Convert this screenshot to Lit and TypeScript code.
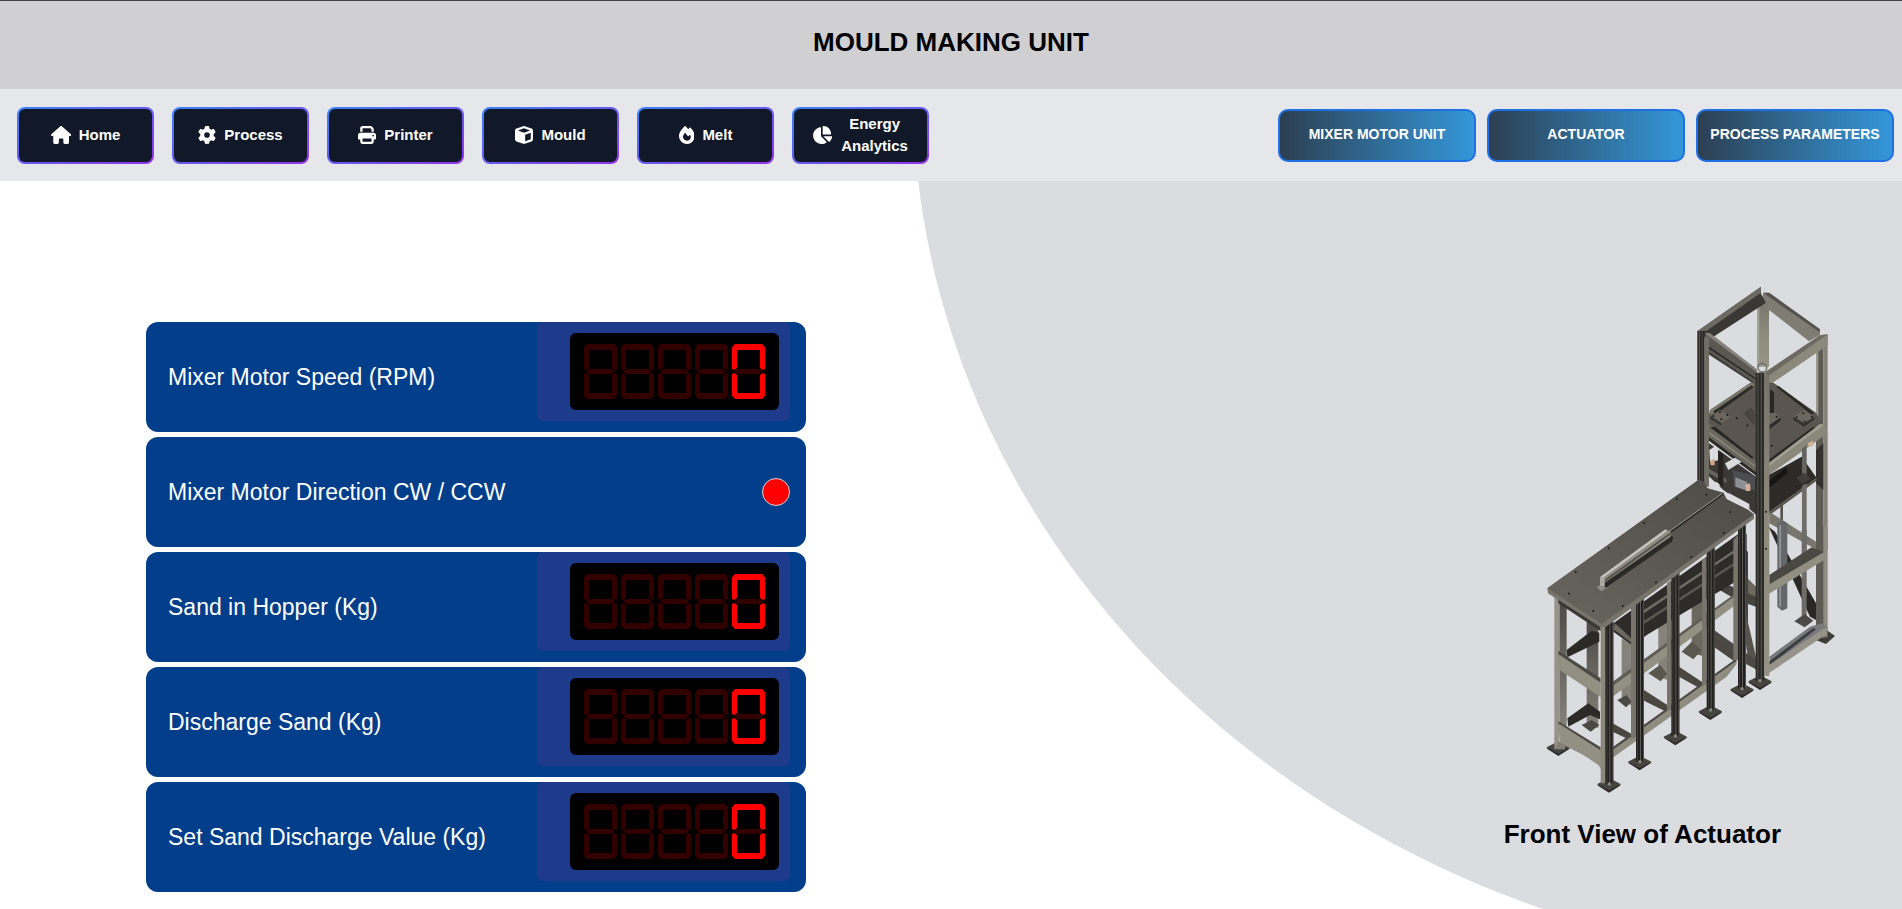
import { LitElement, html, css, svg } from "lit";
import { customElement, property } from "lit/decorators.js";

interface NavItem {
  label: string;
  width: number;
  path: string;
}

const NAV: NavItem[] = [
  {
    label: "Home",
    width: 576,
    path: "M575.8 255.5c0 18-15 32.1-32 32.1h-32l.7 160.2c0 2.7-.2 5.4-.5 8.1V472c0 22.1-17.9 40-40 40H456c-1.1 0-2.2 0-3.3-.1c-1.4 .1-2.8 .1-4.2 .1H416 392c-22.1 0-40-17.9-40-40V448 384c0-17.7-14.3-32-32-32H256c-17.7 0-32 14.3-32 32v64 24c0 22.1-17.9 40-40 40H160 128.1c-1.5 0-3-.1-4.5-.2c-1.2 .1-2.4 .2-3.6 .2H104c-22.1 0-40-17.9-40-40V360c0-.9 0-1.9 .1-2.8V287.6H32c-18 0-32-14-32-32.1c0-9 3-17 10-24L266.4 8c7-7 15-8 22-8s15 2 21 7L564.8 231.5c8 7 12 15 11 24z",
  },
  {
    label: "Process",
    width: 512,
    path: "M495.9 166.6c3.2 8.7 .5 18.4-6.4 24.6l-43.3 39.4c1.1 8.3 1.7 16.8 1.7 25.4s-.6 17.1-1.7 25.4l43.3 39.4c6.9 6.2 9.6 15.9 6.4 24.6c-4.4 11.9-9.7 23.3-15.8 34.3l-4.7 8.1c-6.6 11-14 21.4-22.1 31.2c-5.9 7.2-15.7 9.6-24.5 6.8l-55.7-17.7c-13.4 10.3-28.2 18.9-44 25.4l-12.5 57.1c-2 9.1-9 16.3-18.2 17.8c-13.8 2.3-28 3.5-42.5 3.5s-28.7-1.2-42.5-3.5c-9.2-1.5-16.2-8.7-18.2-17.8l-12.5-57.1c-15.8-6.5-30.6-15.1-44-25.4L83.1 425.9c-8.8 2.8-18.6 .3-24.5-6.8c-8.1-9.8-15.5-20.2-22.1-31.2l-4.7-8.1c-6.1-11-11.4-22.4-15.8-34.3c-3.2-8.7-.5-18.4 6.4-24.6l43.3-39.4C64.6 273.1 64 264.6 64 256s.6-17.1 1.7-25.4L22.4 191.2c-6.9-6.2-9.6-15.9-6.4-24.6c4.4-11.9 9.7-23.3 15.8-34.3l4.7-8.1c6.6-11 14-21.4 22.1-31.2c5.9-7.2 15.7-9.6 24.5-6.8l55.7 17.7c13.4-10.3 28.2-18.9 44-25.4l12.5-57.1c2-9.1 9-16.3 18.2-17.8C227.3 1.2 241.5 0 256 0s28.7 1.2 42.5 3.5c9.2 1.5 16.2 8.7 18.2 17.8l12.5 57.1c15.8 6.5 30.6 15.1 44 25.4l55.7-17.7c8.8-2.8 18.6-.3 24.5 6.8c8.1 9.8 15.5 20.2 22.1 31.2l4.7 8.1c6.1 11 11.4 22.4 15.8 34.3zM256 336a80 80 0 1 0 0-160 80 80 0 1 0 0 160z",
  },
  {
    label: "Printer",
    width: 512,
    path: "M128 0C92.7 0 64 28.7 64 64v96h64V64H354.7L384 93.3V160h64V93.3c0-17-6.7-33.3-18.7-45.3L400 18.7C388 6.7 371.7 0 354.7 0H128zM384 352v32 64H128V384 368 352H384zm64 32h32c17.7 0 32-14.3 32-32V256c0-35.3-28.7-64-64-64H64c-35.3 0-64 28.7-64 64v96c0 17.7 14.3 32 32 32H64v64c0 35.3 28.7 64 64 64H384c35.3 0 64-28.7 64-64V384zM432 248a24 24 0 1 1 0 48 24 24 0 1 1 0-48z",
  },
  {
    label: "Mould",
    width: 512,
    path: "M234.5 5.7c13.9-5 29.1-5 43.1 0l192 68.6C495 83.4 512 107.5 512 134.6V377.4c0 27-17 51.2-42.5 60.3l-192 68.6c-13.9 5-29.1 5-43.1 0l-192-68.6C17 428.6 0 404.5 0 377.4V134.6c0-27 17-51.2 42.5-60.3l192-68.6zM256 66L82.3 128 256 190l173.7-62L256 66zm32 368.6l160-57.1v-188L288 246.6v188z",
  },
  {
    label: "Melt",
    width: 448,
    path: "M159.3 5.4c7.8-7.3 19.9-7.2 27.7 .1c27.6 25.9 53.5 53.8 77.7 84c11-14.4 23.5-30.1 37-42.9c7.9-7.4 20.1-7.4 28 .1c34.6 33 63.9 76.6 84.5 118c20.3 40.8 33.8 82.5 33.8 111.9C448 404.2 348.2 512 224 512C98.4 512 0 404.1 0 276.5c0-38.4 17.8-85.3 45.4-131.7C73.3 97.7 112.7 48.6 159.3 5.4zM225.7 416c25.3 0 47.7-7 68.8-21c42.1-29.4 53.4-88.2 28.1-134.4c-4.5-9-16-9.6-22.5-2l-25.2 29.3c-6.6 7.6-18.5 7.4-24.7-.5c-16.5-21-46-58.5-62.8-79.8c-6.3-8-18.3-8.1-24.7-.1c-33.8 42.5-50.8 69.3-50.8 99.4C112 375.4 162.6 416 225.7 416z",
  },
  {
    label: "Energy Analytics",
    width: 576,
    path: "M304 240V16.6c0-9 7-16.6 16-16.6C443.7 0 544 100.3 544 224c0 9-7.6 16-16.6 16H304zM32 272C32 150.7 122.1 50.3 239 34.3c9.2-1.3 17 6.1 17 15.4V288L412.5 444.5c6.7 6.7 6.2 17.7-1.5 23.1C371.8 495.6 323.8 512 272 512C139.5 512 32 404.6 32 272zm526.4 16c9.3 0 16.6 7.8 15.4 17c-7.7 55.9-34.6 105.6-73.9 142.3c-6 5.6-15.4 5.2-21.2-.7L320 288H558.4z",
  },
];

const UNITS = ["MIXER MOTOR UNIT", "ACTUATOR", "PROCESS PARAMETERS"];

const READINGS: { label: string; value?: number; on?: boolean }[] = [
  { label: "Mixer Motor Speed (RPM)", value: 0 },
  { label: "Mixer Motor Direction CW / CCW", on: false },
  { label: "Sand in Hopper (Kg)", value: 0 },
  { label: "Discharge Sand (Kg)", value: 0 },
  { label: "Set Sand Discharge Value (Kg)", value: 0 },
];

/* Segment outlines a-g on a 33 x 55 digit. */
const SEGMENTS = [
  "3,0 30,0 32,2 29,6 4,6 1,2",
  "28,6 31,2 33,3 33,25 31,26 28,24",
  "28,31 31,29 33,30 33,52 31,53 28,49",
  "4,49 29,49 32,53 30,55 3,55 1,53",
  "0,30 2,29 5,31 5,49 2,53 0,52",
  "0,3 2,2 5,6 5,24 2,26 0,25",
  "5,25 28,25 31,27 28,30 5,30 2,27",
];
const GLYPHS: Record<string, string> = {
  "0": "abcdef", "1": "bc", "2": "abged", "3": "abgcd", "4": "fgbc",
  "5": "afgcd", "6": "afgedc", "7": "abc", "8": "abcdefg", "9": "abcdfg",
};

@customElement("seven-segment")
export class SevenSegment extends LitElement {
  @property({ type: Number }) value = 0;
  @property({ type: Number }) count = 5;

  static styles = css`
    :host {
      display: flex;
      gap: 4px;
      padding: 11px 14px;
      background: #000;
      border-radius: 6px;
    }
    .digit {
      width: 33px;
      height: 55px;
      display: block;
    }
    .off { fill: #330000; }
    .lit { fill: #ff0000; }
  `;

  render() {
    const chars = String(this.value).padStart(this.count, " ").split("");
    return chars.map((ch) => {
      const lit = GLYPHS[ch] ?? "";
      return html`<svg class="digit" viewBox="0 0 33 55" aria-hidden="true">
        ${SEGMENTS.map(
          (points, i) =>
            svg`<polygon class=${lit.includes("abcdefg"[i]) ? "lit" : "off"} points=${points}></polygon>`
        )}
      </svg>`;
    });
  }
}

type Shape = [points: string, fill: string];
const poly = (shapes: Shape[]) =>
  shapes.map(([points, fill]) => svg`<polygon points=${points} fill=${fill}></polygon>`);
const dots = (points: [number, number][]) =>
  points.map(([x, y]) => svg`<circle cx=${x} cy=${y} r="3" fill="#1c1b19"></circle>`);
const foot = (x: number, y: number) => svg`
  <polygon points="${x - 35},${y} ${x},${y - 18} ${x + 35},${y} ${x},${y + 24}" fill="#46443f"></polygon>
  <polygon points="${x - 35},${y} ${x},${y + 19} ${x + 35},${y} ${x + 33},${y + 5} ${x},${y + 26} ${x - 33},${y + 5}" fill="#2d2b28"></polygon>`;
const darkPost = (x: number, top: number, bottom: number) => svg`
  <rect x=${x} y=${top} width="24" height=${bottom - top} fill="#22211f"></rect>
  <rect x=${x + 4} y=${top} width="2" height=${bottom - top} fill="#4f4d48"></rect>
  <rect x=${x + 12} y=${top} width="3" height=${bottom - top} fill="#5d5b55"></rect>
  <rect x=${x + 21} y=${top} width="3" height=${bottom - top} fill="#514f49"></rect>
  <circle cx=${x + 12} cy=${bottom} r="5" fill="#8a8983"></circle>`;

@customElement("actuator-drawing")
export class ActuatorDrawing extends LitElement {
  static styles = css`
    :host { display: block; }
    .drawing { display: block; width: 100%; height: auto; }
  `;

  render() {
    return html`<svg class="drawing" viewBox="48 -522 870 1530" role="img" aria-label="Actuator frame">
      <defs>
        <linearGradient id="steel" x1="0" y1="0" x2="0" y2="1">
          <stop offset="0" stop-color="#77746a"></stop>
          <stop offset="0.5" stop-color="#8c897d"></stop>
          <stop offset="1" stop-color="#959286"></stop>
        </linearGradient>
        <linearGradient id="shade" x1="0" y1="0" x2="0" y2="1">
          <stop offset="0" stop-color="#4b4a45"></stop>
          <stop offset="1" stop-color="#838177"></stop>
        </linearGradient>
        <linearGradient id="plate" x1="0" y1="1" x2="1" y2="0">
          <stop offset="0" stop-color="#69665e"></stop>
          <stop offset="0.5" stop-color="#5b5851"></stop>
          <stop offset="1" stop-color="#4d4b46"></stop>
        </linearGradient>
      </defs>

      <!-- tower, upper half -->
      <g transform="translate(390 -570)">
        ${poly([
          ["291,85 327,85 327,290 291,290", "url(#steel)"],
          ["291,85 298,85 298,290 291,290", "#a3a095"],
          ["310,68 327,68 480,178 480,195 447,214 327,120 303,98", "#7f7d73"],
          ["310,68 327,68 480,178 478,186 320,76", "#55534d"],
          ["113,183 303,50 303,72 318,98 150,207 135,203", "#3a3834"],
          ["113,183 303,50 303,68 140,182", "#6c6a62"],
          ["468,215 490,205 490,840 468,840", "#5d5b54"],
          ["468,215 475,212 475,460 468,460", "#9b988d"],
          ["490,200 503,193 503,840 490,840", "#85827a"],
          ["468,540 490,520 490,660 468,640", "#33312e"],
          ["135,188 150,190 290,298 290,342 135,240", "#5a5851"],
          ["135,188 150,190 290,298 290,306 145,198", "#85837a"],
          ["135,222 290,326 290,331 135,228", "#272623"],
          ["135,238 290,341 290,347 135,246", "#3a3935"],
          ["313,308 480,196 503,193 503,226 327,346 313,352", "#8b887c"],
          ["313,308 480,196 503,193 325,318", "#6c6a61"],
        ])}
        <circle cx="307" cy="293" r="13" fill="none" stroke="#77756d" stroke-width="5"></circle>
        ${poly([
          ["150,420 275,336 340,338 468,428 488,462 325,582 290,592 140,468", "#5a564f"],
          ["150,420 275,336 284,345 152,436", "#7b786e"],
          ["160,424 275,346 280,352 165,434", "#2c2a27"],
          ["350,352 356,348 462,428 455,434", "#2b2926"],
          ["330,358 342,366 342,430 330,430", "#292724"],
          ["152,438 180,420 212,440 184,460", "#6b675f"],
          ["152,438 184,460 184,467 150,446", "#35332f"],
          ["400,440 432,420 464,440 432,460", "#6b675f"],
          ["400,440 432,460 464,440 464,448 432,470 400,450", "#35332f"],
          ["318,430 345,428 362,442 328,466", "#68655d"],
          ["328,466 362,442 362,452 328,478", "#2d2b28"],
          ["250,430 272,412 284,425 284,468", "#494640"],
          ["140,470 150,462 290,578 290,618 137,505", "#69675e"],
          ["150,472 165,470 280,562 276,566", "#292724"],
          ["137,478 290,590 290,594 137,484", "#8d8a80"],
          ["137,494 290,608 290,618 137,505", "#2c2a27"],
          ["325,580 480,462 492,464 503,490 325,616", "#8a877b"],
          ["325,570 460,470 466,474 325,580", "#2c2a27"],
          ["325,580 480,462 492,464 325,590", "#a19e92"],
        ])}
        ${dots([[160, 438], [180, 427], [184, 448], [202, 435], [410, 442], [430, 430], [434, 455], [456, 440], [230, 445], [262, 466], [335, 527], [350, 440]])}
        ${poly([
          ["137,512 290,622 290,736 255,705 190,660 137,610", "#3b3936"],
          ["148,540 166,528 180,545 180,570 150,575", "#dbdce0"],
          ["195,580 225,563 245,575 205,600", "#dbdce0"],
          ["146,630 180,640 176,664 150,648", "#dbdce0"],
          ["205,668 268,702 268,722 215,694", "#dbdce0"],
          ["137,590 200,628 200,640 137,604", "#65635c"],
          ["174,540 190,552 190,650 174,640", "#242320"],
          ["218,600 285,618 285,660 222,650", "#4b4d50"],
          ["226,622 262,636 262,662 226,650", "#8c9095"],
          ["150,572 164,566 164,586 152,586", "#d0a78d"],
          ["256,644 270,640 272,662 258,664", "#d5af98"],
          ["325,616 425,560 470,624 325,728", "#2d2a27"],
          ["328,632 380,590 382,610 328,652", "#161513"],
          ["325,728 470,624 470,632 325,738", "#57544d"],
          ["443,520 458,512 462,526 446,532", "#d0b49b"],
          ["426,535 440,526 440,616 426,620", "#65645f"],
          ["408,624 432,608 454,626 428,642", "#3f3d39"],
          ["426,648 440,640 440,840 426,840", "#706e69"],
          ["361,700 369,695 369,756 361,756", "#55534e"],
        ])}
        <rect x="112" y="183" width="22" height="460" fill="#292825"></rect>
        <rect x="117" y="183" width="3" height="460" fill="#5c5a53"></rect>
        <rect x="125" y="183" width="3" height="460" fill="#4c4a45"></rect>
        <rect x="134" y="200" width="13" height="450" fill="#6f6d64"></rect>
      </g>

      <!-- tower, lower half -->
      ${poly([
        ["858,200 882,200 882,525 858,505", "#5d5b54"],
        ["880,200 893,200 893,522 880,530", "#8f8c80"],
        ["858,540 893,512 915,528 888,552", "#3f3d39"],
        ["876,505 893,500 893,530 876,534", "#85827a"],
        ["718,155 858,245 858,268 718,190", "#77756c"],
        ["716,200 735,215 858,430 858,480 840,470", "#2a2826"],
        ["742,190 756,180 772,190 772,445 756,452 742,440", "#65676a"],
        ["748,195 753,195 753,440 748,440", "#93969a"],
        ["815,210 830,210 830,475 815,475", "#6d6c69"],
        ["793,484 824,462 850,482 824,502", "#4b4a49"],
        ["718,345 845,262 882,276 882,284 718,378", "#4a4843"],
        ["716,374 882,276 882,300 716,402", "#918e82"],
        ["718,590 840,500 875,490 890,500 720,622", "#77797d"],
        ["718,604 850,504 858,508 718,616", "#3c3d40"],
        ["716,616 890,500 890,522 716,640", "#96948a"],
      ])}

      <!-- back of the bench -->
      ${poly([
        ["648,350 678,380 678,420 648,410", "#6a685f"],
        ["648,270 654,276 654,520 648,520", "#44423d"],
        ["560,360 678,410 678,440 620,420 560,385", "#45433e"],
        ["630,440 650,470 678,590 678,630 655,600", "#55534c"],
        ["545,505 678,600 678,628 625,600 545,540", "#4b4943"],
        ["170,480 205,505 205,805 170,790", "url(#shade)"],
        ["275,535 303,550 303,735 275,725", "#85827a"],
        ["385,475 412,490 412,660 385,650", "#85827a"],
        ["485,405 527,425 527,590 485,580", "#6b695f"],
        ["155,795 185,780 208,795 182,815", "#4a4843"],
        ["262,720 290,705 305,725 288,742", "#4a4843"],
        ["355,640 390,615 412,642 392,664", "#5a574f"],
        ["455,575 485,545 515,570 490,598", "#5a574f"],
        ["110,570 185,512 208,518 208,545 112,592", "#2c2a27"],
        ["112,775 175,730 210,755 210,778 180,765 115,800", "#2c2a27"],
        ["248,790 305,822 300,840 248,815", "#4a4740"],
        ["342,690 420,740 415,758 342,722", "#4a4740"],
        ["447,620 522,670 515,688 447,650", "#4a4740"],
        ["553,530 622,590 616,606 553,562", "#4a4740"],
        ["250,490 625,222 650,222 650,345 350,525 310,558 250,515", "#2e2c29"],
        ["342,450 625,262 625,270 342,460", "#6e6c64"],
        ["342,482 625,300 625,308 342,492", "#595751"],
        ["255,490 304,535 304,548 250,508", "#6a685f"],
      ])}

      <!-- bench rails -->
      ${poly([
        ["248,665 623,395 623,412 248,682", "#5e5c54"],
        ["248,678 623,402 623,430 248,710", "#928f83"],
        ["248,862 590,622 620,600 620,612 590,650 248,893", "#8f8c80"],
        ["248,862 620,595 620,602 248,870", "#4c4a44"],
      ])}

      <!-- legs on the long side -->
      ${poly([
        ["303,440 318,430 318,830 303,840", "#77756b"],
        ["411,370 424,360 424,750 411,750", "#77756b"],
        ["516,300 530,290 530,670 516,680", "#77756b"],
        ["610,240 624,225 624,600 610,600", "#77756b"],
      ])}
      ${foot(329, 905)} ${foot(436, 830)} ${foot(541, 754)} ${foot(636, 688)} ${foot(690, 664)}
      ${foot(85, 862)} ${foot(237, 972)}
      ${darkPost(318, 410, 905)} ${darkPost(424, 335, 828)} ${darkPost(530, 260, 750)} ${darkPost(624, 195, 686)}

      <!-- short side -->
      ${poly([
        ["88,420 110,432 110,805 88,800", "url(#shade)"],
        ["73,400 88,405 88,866 73,866", "#96938a"],
        ["85,572 212,655 212,668 85,590", "#4c4a44"],
        ["85,582 212,668 212,712 85,628", "#928f83"],
        ["85,784 212,862 212,875 85,795", "#4c4a44"],
        ["85,790 214,872 222,940 205,915 160,885 90,850", "#928f83"],
        ["85,845 105,855 105,868 73,868", "#85827a"],
        ["85,418 212,498 212,514 85,430", "#3b3934"],
      ])}
      <rect x="212" y="495" width="16" height="475" fill="#8a877b"></rect>
      ${darkPost(226, 485, 972)}

      <!-- bench top -->
      ${poly([
        ["52,385 505,60 523,66 532,85 580,98 590,118 655,150 672,162 672,176 228,500 212,502 54,400", "#77746b"],
        ["52,385 505,60 523,66 532,85 580,98 590,118 655,150 670,164 215,492", "url(#plate)"],
      ])}
      ${dots([[117, 401], [137, 336], [236, 265], [342, 189], [441, 117], [529, 104], [601, 156], [582, 219], [484, 291], [378, 367], [278, 438], [190, 453]])}
      <path d="M420 216 580 100" stroke="#24231f" stroke-width="7"></path>
      <path d="M418 214 580 98" stroke="#a9a8a2" stroke-width="3"></path>
      ${poly([
        ["200,382 212,374 232,384 214,394", "#8e8c84"],
        ["226,384 425,246 430,232 420,226 222,364", "#2b2926"],
        ["210,350 405,208 422,214 422,230 224,368 210,370", "#8e8c83"],
        ["212,350 405,209 412,213 218,354", "#c6c4bc"],
        ["222,360 420,218 421,224 224,366", "#55534d"],
      ])}
      <rect x="210" y="352" width="14" height="26" fill="#aaa8a0"></rect>

      <!-- front tower post -->
      <rect x="677" y="-262" width="26" height="924" fill="#2b2a27"></rect>
      <rect x="682" y="-262" width="3" height="924" fill="#57554f"></rect>
      <rect x="692" y="-262" width="4" height="924" fill="#4e4c47"></rect>
      <rect x="702" y="-256" width="16" height="904" fill="url(#steel)"></rect>
      <circle cx="690" cy="662" r="5" fill="#8a8983"></circle>
      ${dots([[708, 155], [708, 266]])}
    </svg>`;
  }
}

@customElement("app-root")
export class AppRoot extends LitElement {
  static styles = css`
    :host {
      display: flex;
      flex-direction: column;
      min-height: 100vh;
      box-sizing: border-box;
      background: #fff;
      color: #000;
      font-family: "Liberation Sans", Arial, sans-serif;
    }
    * { box-sizing: border-box; }

    .header {
      display: flex;
      justify-content: center;
      padding: 23px 16px 29px;
      border-top: 1px solid #45453f;
      background: #d0d0d2;
    }
    .title {
      margin: 0;
      font-size: 26px;
      line-height: 36px;
      font-weight: 700;
    }

    .toolbar {
      display: flex;
      align-items: center;
      justify-content: space-between;
      gap: 18px;
      padding: 18px 8px 17px 17px;
      background: #e5e7eb;
    }
    .nav { display: flex; gap: 18px; }
    .units { display: flex; gap: 11px; }
    button {
      font-family: inherit;
      font-weight: 700;
      color: #fff;
      cursor: pointer;
    }
    .nav-button {
      display: flex;
      align-items: center;
      justify-content: center;
      gap: 8px;
      width: 137px;
      height: 57px;
      padding: 0 18px 2px;
      border: 2px solid transparent;
      border-radius: 8px;
      background:
        linear-gradient(#111827, #111827) padding-box,
        linear-gradient(to bottom right, #3b82f6, #9333ea) border-box;
      font-size: 15px;
      line-height: 22px;
    }
    .icon {
      flex: none;
      height: 18px;
      fill: currentColor;
    }
    .unit-button {
      width: 198px;
      height: 53px;
      padding: 0 0 3px;
      border: 2px solid #1f6fe5;
      border-radius: 10px;
      background: linear-gradient(to right, #2c3e50, #3498db) border-box;
      font-size: 14px;
      line-height: 20px;
      white-space: nowrap;
    }

    .main {
      position: relative;
      isolation: isolate;
      flex: 1;
      display: flex;
      align-items: flex-start;
      justify-content: space-between;
      gap: 32px;
      padding: 105px 66px 14px 146px;
      overflow: hidden;
    }
    .main::before {
      content: "";
      position: absolute;
      inset: 0;
      z-index: -1;
      background: #dbdce0;
      clip-path: ellipse(52% 879px at 100% -91px);
    }

    .readings {
      flex: 0 1 660px;
      display: flex;
      flex-direction: column;
      gap: 5px;
      margin: 0;
      padding: 36px 0 0;
      list-style: none;
    }
    .card {
      display: flex;
      align-items: center;
      justify-content: space-between;
      height: 110px;
      padding: 0 16px 0 22px;
      border-radius: 12px;
      background: #023e8a;
      color: #fff;
      font-size: 23px;
      line-height: 32px;
    }
    .panel {
      align-self: flex-start;
      padding: 11px 11px 11px 33px;
      border-radius: 6px;
      background: #1e3a8a;
    }
    .lamp {
      width: 28px;
      height: 28px;
      border: 1px solid #d1d5db;
      border-radius: 50%;
      background: #ff0000;
    }
    .lamp.on { background: #22c55e; }

    .figure {
      flex: 0 0 290px;
      display: flex;
      flex-direction: column;
      align-items: flex-end;
      gap: 20px;
      margin: 0;
    }
    .view { width: 290px; }
    .caption {
      padding-right: 55px;
      font-size: 26px;
      line-height: 36px;
      font-weight: 700;
      white-space: nowrap;
    }
  `;

  render() {
    return html`
      <header class="header"><h1 class="title">MOULD MAKING UNIT</h1></header>
      <div class="toolbar">
        <nav class="nav">
          ${NAV.map(
            (item) => html`<button class="nav-button" type="button">
              <svg class="icon" viewBox="0 0 ${item.width} 512" aria-hidden="true">
                <path d=${item.path}></path>
              </svg>
              <span>${item.label}</span>
            </button>`
          )}
        </nav>
        <div class="units">
          ${UNITS.map((unit) => html`<button class="unit-button" type="button">${unit}</button>`)}
        </div>
      </div>
      <main class="main">
        <ul class="readings">
          ${READINGS.map(
            (r) => html`<li class="card">
              <span>${r.label}</span>
              ${r.value === undefined
                ? html`<span class="lamp ${r.on ? "on" : ""}" role="img" aria-label=${r.on ? "CW" : "CCW"}></span>`
                : html`<div class="panel">
                    <seven-segment .value=${r.value} role="img" aria-label=${String(r.value)}></seven-segment>
                  </div>`}
            </li>`
          )}
        </ul>
        <figure class="figure">
          <actuator-drawing class="view"></actuator-drawing>
          <figcaption class="caption">Front View of Actuator</figcaption>
        </figure>
      </main>
    `;
  }
}
